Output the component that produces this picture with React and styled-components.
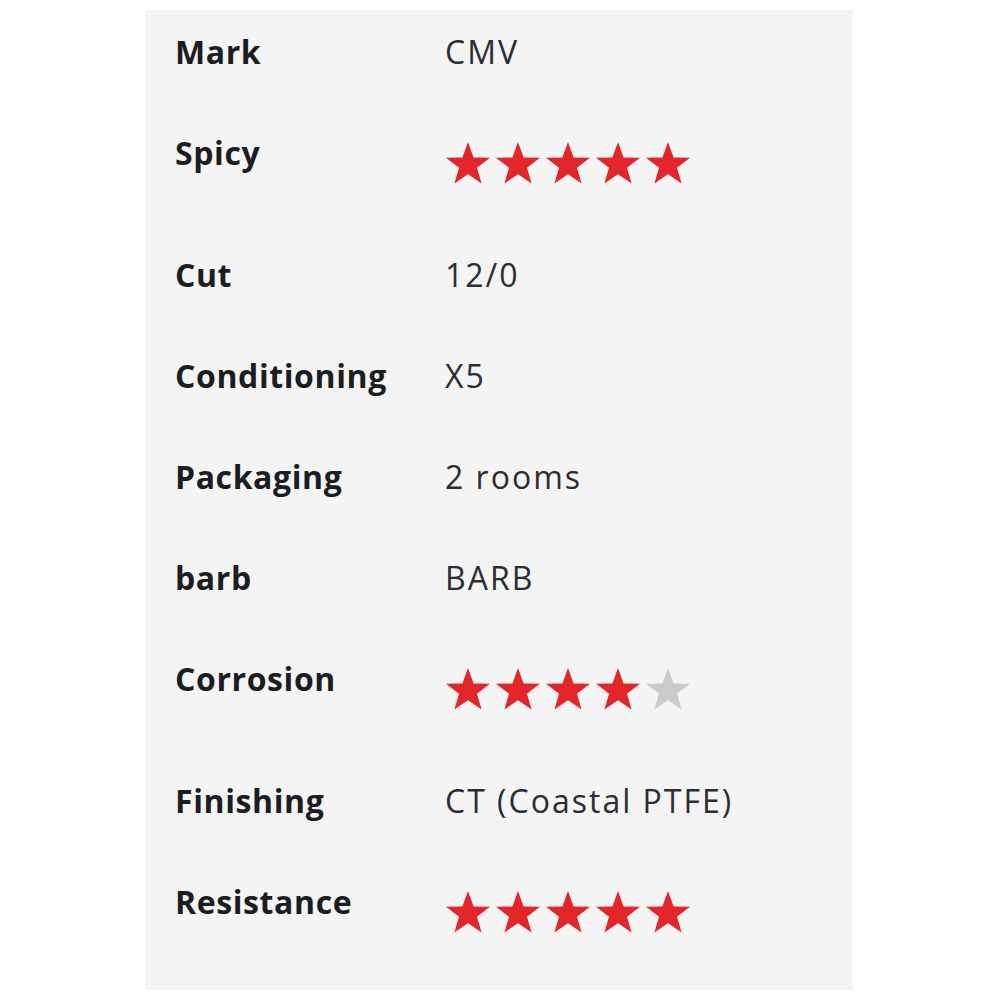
import React from 'react';
import styled, { createGlobalStyle } from 'styled-components';

const GlobalStyle = createGlobalStyle`
    html, body {
        margin: 0;
        padding: 0;
        background: #ffffff;
    }
    body {
        font-family: "Open Sans", "Liberation Sans", sans-serif;
    }
`;

const Page = styled.div`
    width: 1000px;
    height: 1000px;
    padding: 10px 0 0 145px;
    box-sizing: border-box;
`;

const Panel = styled.div`
    width: 708px;
    height: 980px;
    background: #f4f4f4;
    box-sizing: border-box;
    padding: 21px 0 0 30px;
`;

const Row = styled.div`
    display: grid;
    grid-template-columns: 270px 1fr;
    align-items: start;
    height: ${(props) => (props.$tall ? 122 : 101)}px;
`;

const Label = styled.div`
    font-size: 32px;
    font-weight: 700;
    line-height: 42px;
    color: #1b1d22;
    letter-spacing: 0.6px;
`;

const Value = styled.div`
    font-size: 32px;
    font-weight: 400;
    line-height: 42px;
    color: #2b2d31;
    letter-spacing: 2px;
`;

const Stars = styled.div`
    display: flex;
    gap: 4px;
    margin-top: 9px;
`;

const STAR = 'M23 1 L28.6 16.4 L45 16.8 L32 26.8 L36.6 42.5 L23 33.2 L9.4 42.5 L14 26.8 L1 16.8 L17.4 16.4 Z';

const Star = ({ on }) => (
    <svg width="46" height="44" viewBox="0 0 46 44">
        <path d={STAR} fill={on ? '#e3262a' : '#cbcbcb'} />
    </svg>
);

const Rating = ({ value }) => (
    <Stars>
        {[1, 2, 3, 4, 5].map((i) => (
            <Star key={i} on={i <= value} />
        ))}
    </Stars>
);

const specs = [
    { label: 'Mark', value: 'CMV' },
    { label: 'Spicy', stars: 5 },
    { label: 'Cut', value: '12/0' },
    { label: 'Conditioning', value: 'X5' },
    { label: 'Packaging', value: '2 rooms' },
    { label: 'barb', value: 'BARB' },
    { label: 'Corrosion', stars: 4 },
    { label: 'Finishing', value: 'CT (Coastal PTFE)' },
    { label: 'Resistance', stars: 5 },
];

const App = () => {
    return (
        <>
            <GlobalStyle />
            <Page>
                <Panel>
                    {specs.map((s) => (
                        <Row key={s.label} $tall={s.stars !== undefined}>
                            <Label>{s.label}</Label>
                            {s.stars !== undefined ? <Rating value={s.stars} /> : <Value>{s.value}</Value>}
                        </Row>
                    ))}
                </Panel>
            </Page>
        </>
    );
};

export default App;
